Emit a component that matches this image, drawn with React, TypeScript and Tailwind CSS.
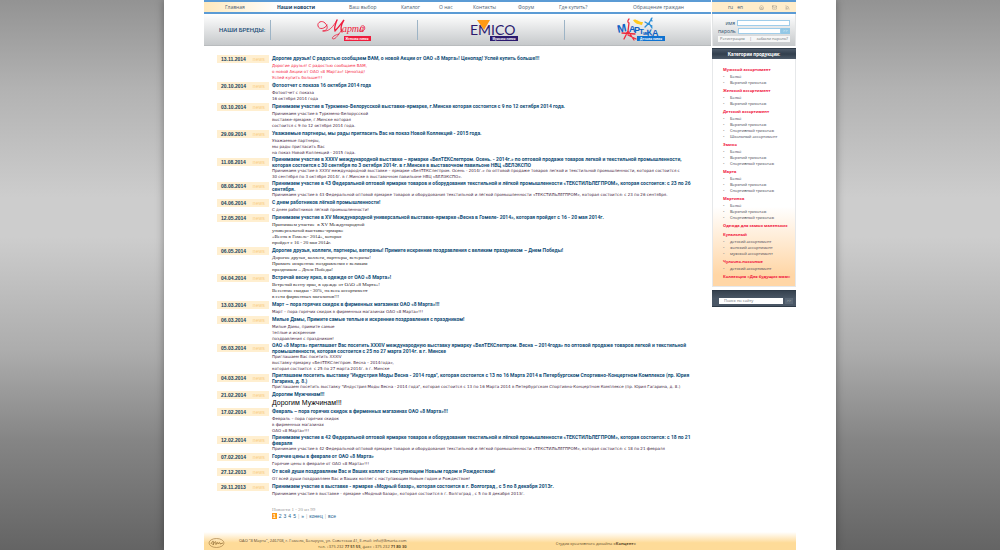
import { Home, Mail, Rss } from "lucide-react";
import clsx from "clsx";

type NewsItem = {
  date: string;
  title: string[];
  text: string[];
  style?: "red" | "serif" | "large";
};

type Category = { name: string; items: string[] };

const nav = [
  "Главная",
  "Наши новости",
  "Ваш выбор",
  "Каталог",
  "О нас",
  "Контакты",
  "Форум",
  "Где купить?",
  "Обращение граждан",
];

const news: NewsItem[] = [
  {
    date: "13.11.2014",
    title: ["Дорогие друзья! С радостью сообщаем ВАМ, о новой Акции от ОАО «8 Марта»! Ценопад! Успей купить больше!!!"],
    text: ["Дорогие друзья! С радостью сообщаем ВАМ,", "о новой Акции от ОАО «8 Марта»! Ценопад!", "Успей купить больше!!!"],
    style: "red",
  },
  {
    date: "20.10.2014",
    title: ["Фотоотчет с показа 16 октября 2014 года"],
    text: ["Фотоотчет с показа", "16 октября 2014 года"],
  },
  {
    date: "03.10.2014",
    title: ["Принимаем участие в Туркмено-Белорусской выставке-ярмарке, г.Минске которая состоится с 9 по 12 октября 2014 года."],
    text: ["Принимаем участие в Туркмено-Белорусской", "выставке-ярмарке, г.Минске которая", "состоится с 9 по 12 октября 2014 года."],
  },
  {
    date: "29.09.2014",
    title: ["Уважаемые партнеры, мы рады пригласить Вас на показ Новой Коллекций - 2015 года."],
    text: ["Уважаемые партнеры,", "мы рады пригласить Вас", "на показ Новой Коллекций - 2015 года."],
  },
  {
    date: "11.08.2014",
    title: [
      "Принимаем участие в XXXV международной выставке – ярмарке «БелТЕКСлегпром. Осень. - 2014г.» по оптовой продаже товаров легкой и текстильной промышленности,",
      "которая состоится с 30 сентября по 3 октября 2014г. в г.Минске в выставочном павильоне НВЦ «БЕЛЭКСПО",
    ],
    text: [
      "Принимаем участие в XXXV международной выставке – ярмарке «БелТЕКСлегпром. Осень - 2014г.» по оптовой продаже товаров легкой и текстильной промышленности, которая состоится с",
      "30 сентября по 3 октября 2014г. в г.Минске в выставочном павильоне НВЦ «БЕЛЭКСПО».",
    ],
  },
  {
    date: "08.08.2014",
    title: [
      "Принимаем участие в 43 Федеральной оптовой ярмарке товаров и оборудования текстильной и лёгкой промышленности «ТЕКСТИЛЬЛЕГПРОМ», которая состоится: с 23 по 26",
      "сентября.",
    ],
    text: ["Принимаем участие в 43 Федеральной оптовой ярмарке товаров и оборудования текстильной и лёгкой промышленности «ТЕКСТИЛЬЛЕГПРОМ», которая состоится: с 23 по 26 сентября."],
  },
  {
    date: "04.06.2014",
    title: ["С днем работников лёгкой промышленности!"],
    text: ["С днем работников лёгкой промышленности!"],
  },
  {
    date: "12.05.2014",
    title: ["Принимаем участие в XV Международной универсальной выставке-ярмарке «Весна в Гомеле- 2014», которая пройдет с 16 - 20 мая 2014г."],
    text: ["Принимаем участие  в XV Международной", "универсальной выставке-ярмарке", "«Весна в Гомеле- 2014», которая", "пройдет с 16 - 20 мая 2014г."],
    style: "serif",
  },
  {
    date: "06.05.2014",
    title: ["Дорогие друзья, коллеги, партнеры, ветераны! Примите искренние поздравления с великим праздником – Днем Победы!"],
    text: ["Дорогие друзья, коллеги, партнеры, ветераны!", "Примите искренние поздравления с великим", "праздником – Днем Победы!"],
    style: "serif",
  },
  {
    date: "04.04.2014",
    title: ["Встречай весну ярко, в одежде от ОАО «8 Марта»!"],
    text: ["Встречай весну ярко, в одежде от ОАО «8 Марта»!", "Весенние скидки - 30%, на весь ассортимент", "в сети фирменных магазинов!!!"],
    style: "serif",
  },
  {
    date: "13.03.2014",
    title: ["Март – пора горячих скидок в фирменных магазинах ОАО «8 Марта»!!!"],
    text: ["Март – пора горячих скидок в фирменных магазинах ОАО «8 Марта»!!!"],
  },
  {
    date: "06.03.2014",
    title: ["Милые Дамы, Примите самые теплые и искренние поздравления с праздником!"],
    text: ["Милые Дамы, примите самые", "теплые и искренние", "поздравления с праздником!"],
  },
  {
    date: "05.03.2014",
    title: [
      "ОАО «8 Марта» приглашает Вас посетить XXXIV международную выставку ярмарку «БелТЕКСлегпром. Весна – 2014года» по оптовой продаже товаров легкой и текстильной",
      "промышленности, которая состоится с 25 по 27 марта 2014г. в г. Минске",
    ],
    text: ["Приглашаем Вас посетить XXXIV", "выставку-ярмарку «БелТЕКСлегпром. Весна – 2014года»,", "которая состоится  с 25 по 27 марта 2014г. в г. Минске"],
  },
  {
    date: "04.03.2014",
    title: [
      "Приглашаем посетить выставку \"Индустрия Моды Весна - 2014 года\", которая состоится с 13 по 16 Марта 2014 в Петербургском Спортивно-Концертном Комплексе (пр. Юрия",
      "Гагарина, д. 8.)",
    ],
    text: ["Приглашаем посетить выставку \"Индустрия Моды Весна - 2014 года\", которая состоится с 13 по 16 Марта 2014 в Петербургском Спортивно-Концертном Комплексе (пр. Юрия Гагарина, д. 8.)"],
  },
  {
    date: "21.02.2014",
    title: ["Дорогим Мужчинам!!!"],
    text: ["Дорогим Мужчинам!!!"],
    style: "large",
  },
  {
    date: "17.02.2014",
    title: ["Февраль – пора горячих скидок в фирменных магазинах ОАО «8 Марта»!!!"],
    text: ["Февраль – пора горячих скидок", "в фирменных магазинах", "ОАО «8 Марта»!!!"],
  },
  {
    date: "12.02.2014",
    title: [
      "Принимаем участие в 42 Федеральной оптовой ярмарке товаров и оборудования текстильной и лёгкой промышленности «ТЕКСТИЛЬЛЕГПРОМ», которая состоится: с 18 по 21",
      "февраля",
    ],
    text: ["Принимаем участие в 42 Федеральной оптовой ярмарке товаров и оборудования текстильной и лёгкой промышленности «ТЕКСТИЛЬЛЕГПРОМ», которая состоится: с 18 по 21 февраля"],
  },
  {
    date: "07.02.2014",
    title: ["Горячие цены в феврале от ОАО «8 Марта»"],
    text: ["Горячие цены в феврале от ОАО «8 Марта»!!!"],
  },
  {
    date: "27.12.2013",
    title: ["От всей души поздравляем Вас и Ваших коллег с наступающим Новым годом и Рождеством!"],
    text: ["От всей души поздравляем Вас и Ваших коллег с наступающим Новым годом и Рождеством!"],
  },
  {
    date: "29.11.2013",
    title: ["Принимаем участие в выставке - ярмарке «Модный базар», которая состоится в г. Волгоград , с 5 по 8 декабря 2013г."],
    text: ["Принимаем участие в выставке - ярмарке «Модный базар», которая состоится в г. Волгоград , с 5 по 8 декабря 2013г."],
  },
];

const categories: Category[] = [
  { name: "Мужской ассортимент", items: ["Бельё", "Верхний трикотаж"] },
  { name: "Женский ассортимент", items: ["Бельё", "Верхний трикотаж"] },
  { name: "Детский ассортимент", items: ["Бельё", "Верхний трикотаж", "Спортивный трикотаж", "Школьный ассортимент"] },
  { name: "Эмико", items: ["Бельё", "Верхний трикотаж", "Спортивный трикотаж"] },
  { name: "Марта", items: ["Бельё", "Верхний трикотаж", "Спортивный трикотаж"] },
  { name: "Мартинка", items: ["Бельё", "Верхний трикотаж", "Спортивный трикотаж"] },
  { name: "Одежда для самых маленьких", items: [] },
  { name: "Купальный", items: ["детский ассортимент", "женский ассортимент", "мужской ассортимент"] },
  { name: "Чулочно-носочные", items: ["детский ассортимент"] },
  { name: "Коллекция «Для будущих мам»", items: [] },
];

function MartaLogo() {
  return (
    <svg width="56" height="26" viewBox="0 0 56 26" role="img" aria-label="Марта">
      <g fill="none" stroke="#ee1c3c" strokeLinecap="round">
        <path d="M11 8C9 12 3 13 2 9C1 5 6 3 9 6C13 10 11 14 7 14" strokeWidth="0.9" />
        <path d="M7 14C13 15 17 10 21 3" strokeWidth="0.8" />
        <path d="M21 3C19 8 18 12 19 14C23 10 25 7 28 3C25 8 24 12 26 15" strokeWidth="1.3" />
        <path d="M25 14C22 18 20 22 17 22C15 21 18 18 23 17" strokeWidth="0.8" />
        <path d="M43 14C48 15 50 12 48 9C46 8 43 10 45 13" strokeWidth="0.8" />
      </g>
      <text x="26" y="15" fill="#ee1c3c" fontSize="10" fontStyle="italic" fontFamily="'Liberation Serif', serif">
        арта
      </text>
      <rect x="28" y="19" width="27" height="5" fill="#ee1c3c" />
      <text x="41" y="23" textAnchor="middle" fill="#fff" fontSize="3" fontWeight="700" fontFamily="'Liberation Sans', sans-serif">
        Женская линия
      </text>
    </svg>
  );
}

function EmicoLogo() {
  return (
    <svg width="50" height="26" viewBox="0 0 50 26" role="img" aria-label="EMICO">
      <text x="0" y="18" fill="#2b1a6e" fontSize="14" fontFamily="Lato, sans-serif">
        EMICO
      </text>
      <path d="M7 3H20L14 13Z" fill="#ff9a14" />
      <rect x="20" y="19" width="28" height="5" fill="#2b1a6e" />
      <text x="34" y="23" textAnchor="middle" fill="#fff" fontSize="3" fontWeight="700" fontFamily="'Liberation Sans', sans-serif">
        Мужская линия
      </text>
    </svg>
  );
}

function MartinkaLogo() {
  return (
    <svg width="50" height="26" viewBox="0 0 50 26" role="img" aria-label="Мартинка">
      <g fill="none" stroke="#ee2a3c" strokeWidth="1.3" strokeLinecap="round">
        <path d="M12 2C10 4 11 6 12 6M12 6L11 14L7 22M11 14L17 23M5 16L18 17M11 18L19 22" />
      </g>
      <path d="M16 3C19 1 21 5 26 5L25 8C21 7 18 7 16 3Z" fill="#ffc91f" />
      <g fill="none" stroke="#2c8fd8" strokeWidth="1.3" strokeLinecap="round">
        <path d="M35 1L32 6L28 10M32 6L35 11M28 5L35 9M34 2L35 4" />
      </g>
      <g fill="#0e62c4" fontWeight="700" fontFamily="'Liberation Sans', sans-serif">
        <text x="1" y="16" transform="rotate(-12 1 16)" fontSize="11">М</text>
        <text x="12" y="15" fontSize="9">А</text>
        <text x="17" y="16" fontSize="9">Р</text>
        <text x="22" y="17" fontSize="8">Т</text>
        <text x="26" y="18" fontSize="6">и</text>
        <text x="28" y="18" fontSize="5">н</text>
        <text x="30" y="19" transform="rotate(-6 30 19)" fontSize="9">К</text>
        <text x="35" y="19" fontSize="9">А</text>
      </g>
      <rect x="20" y="19" width="28" height="5" fill="#0e72d0" />
      <text x="34" y="23" textAnchor="middle" fill="#fff" fontSize="3" fontWeight="700" fontFamily="'Liberation Sans', sans-serif">
        Детская линия
      </text>
    </svg>
  );
}

function NewsRow({ item }: { item: NewsItem }) {
  const plain = !item.style || item.style === "red";
  return (
    <article className="grid grid-cols-[52px_1fr] gap-x-[3px]">
      <div className="flex h-2 items-center justify-between self-center bg-[#ffefd0] px-1">
        <time className="font-bold text-[#163f5c]">{item.date}</time>
        <span className="tracking-wide text-[#f9cc80]">news</span>
      </div>
      <h2 className={clsx("font-['Roboto',sans-serif] font-bold text-[#134f78]", item.title.length === 1 && "leading-[9px]")}>
        {item.title.map((line) => (
          <a key={line} href="#" className="block">
            {line}
          </a>
        ))}
      </h2>
      <div
        className={clsx(
          "col-start-2",
          plain && "font-['DejaVu_Sans',sans-serif] text-[4px]",
          !item.style && "text-[#3f1d3d]",
          item.style === "red" && "text-[#f5253f]",
          item.style === "serif" && "font-['Liberation_Serif',serif] text-[#1f1a1f]",
          item.style === "large" && "text-[7px] leading-[8px] text-black"
        )}
      >
        {item.text.map((line) => (
          <p key={line}>{line}</p>
        ))}
      </div>
    </article>
  );
}

function Sidebar() {
  return (
    <aside className="w-[84px] shrink-0 font-['Open_Sans',sans-serif] text-[4px] leading-[6px]">
      <div className="flex h-3.5 items-center border-y-2 border-[#5b9bd5] bg-[#ffedcb] pl-4 text-[5px] text-[#3a5a72]">
        <a href="#" className="mr-1">ru</a>
        <a href="#">en</a>
        <div className="ml-4 flex gap-2 text-[#8f8a80]">
          <a href="#" aria-label="Домой"><Home size={5} /></a>
          <a href="#" aria-label="Почта"><Mail size={5} /></a>
          <a href="#" aria-label="RSS"><Rss size={5} /></a>
        </div>
      </div>

      <form className="flex h-8 flex-col gap-0.5 border-x border-[#e2e4e5] bg-linear-to-b from-white to-[#c6c9cb] px-[5px] pt-1.5 text-[#2c4f6b]">
        <div className="flex items-center justify-end gap-0.5">
          <label htmlFor="login" className="text-[5px]">имя</label>
          <input id="login" className="h-[6px] w-[53px] border border-[#9fcdea] bg-white px-0.5" />
        </div>
        <div className="flex items-center justify-end">
          <label htmlFor="password" className="mr-0.5 text-[5px]">пароль</label>
          <input id="password" type="password" className="h-[6px] w-[43px] border border-[#9fcdea] bg-white px-0.5" />
          <button type="button" className="h-[6px] w-[10px] bg-[#93c8e6] text-white">&gt;&gt;</button>
        </div>
        <div className="flex h-[6px] items-center justify-between bg-white/80 px-0.5 whitespace-nowrap text-[#6b7075]">
          <a href="#">Регистрация</a>
          <span>|</span>
          <a href="#">забыли пароль?</a>
        </div>
      </form>

      <h2 className="mt-0.5 h-[11px] border-t border-[#2e3a47] bg-linear-to-b from-[#4d5a69] via-[#323f4d] to-[#4d5a69] text-center font-['Roboto',sans-serif] text-[5px] leading-[10px] font-bold text-white">
        Категории продукции:
      </h2>
      <nav className="border-x border-b border-[#e6e8ea] bg-linear-to-b from-white from-65% to-[#ffd6a6] to-95% pt-[6px] pb-[5px] pl-[10px] whitespace-nowrap">
        {categories.map((category) => (
          <section key={category.name}>
            <h3 className="leading-[9px] font-bold text-[#f0143c]">
              <a href="#">{category.name}</a>
            </h3>
            <ul className="text-[#38384c]">
              {category.items.map((name) => (
                <li key={name} className="flex">
                  <span className="w-[7px] text-[#999]">•</span>
                  <a href="#">{name}</a>
                </li>
              ))}
            </ul>
          </section>
        ))}
      </nav>

      <form className="mt-[3px] flex h-[17px] items-end gap-0.5 border-y border-[#2e3a47] bg-linear-to-b from-[#36424f] via-[#4a5766] to-[#4a5766] px-[3px] pb-0.5 pl-[7px]">
        <input
          aria-label="Поиск по сайту"
          placeholder="Поиск по сайту"
          className="h-[6px] min-w-0 flex-1 bg-white px-[5px] placeholder:text-[#6b7075]"
        />
        <button type="button" className="h-[6px] w-2 bg-[#5b6876] text-[#c5ccd3]">&gt;&gt;</button>
      </form>
    </aside>
  );
}

export default function App() {
  return (
    <div className="min-h-screen bg-[linear-gradient(to_bottom,#939393_0%,#b2b2b2_16%,#cdcdcd_36%,#cdcdcd_43%,#acacac_64%,#858585_80%,#646464_100%)] font-['Liberation_Sans',sans-serif] text-[5px] leading-[6px]">
      <div className="mx-auto flex min-h-screen max-w-2xl flex-col bg-white px-10 shadow-[0_0_8px_rgba(0,0,0,0.35)]">
        <div className="flex flex-1 gap-px">
          <main className="min-w-0 flex-1">
            <nav className="grid h-3.5 grid-cols-[52fr_72fr_52fr_38fr_34fr_45fr_41fr_74fr_78fr] items-center border-y-2 border-[#5b9bd5] bg-linear-to-r from-[#ffe9bd] to-white to-15% pl-[21px] font-['Open_Sans',sans-serif] whitespace-nowrap text-[#4a6072]">
              {nav.map((label, i) => (
                <a key={label} href="#" className={clsx(i === 1 && "font-bold text-[#143f66]")}>
                  {label}
                </a>
              ))}
            </nav>

            <div className="grid h-8 grid-cols-[66px_1fr_1fr_1fr] items-center border-b border-[#b9bcbe] bg-linear-to-b from-white to-[#c6c9cb]">
              <p className="pl-[15px] font-['Roboto',sans-serif] text-[6px] font-medium whitespace-nowrap text-[#1d4f78]">НАШИ БРЕНДЫ:</p>
              <a href="#" className="flex h-5 items-center justify-center border-l border-[#9db4c6]"><MartaLogo /></a>
              <a href="#" className="flex h-5 items-center justify-center border-l border-[#9db4c6] pl-2"><EmicoLogo /></a>
              <a href="#" className="flex h-5 items-center justify-center border-l border-[#9db4c6] pl-2"><MartinkaLogo /></a>
            </div>

            <div className="pt-2 pb-[10px] pl-[13px] whitespace-pre">
              {news.map((item) => (
                <NewsRow key={item.date} item={item} />
              ))}
            </div>

            <div className="pb-3 pl-[68px]">
              <p className="font-['Liberation_Serif',serif] text-[#999]">Новости 1 - 20 из 99</p>
              <div className="flex gap-0.5 text-[#1d5f8f]">
                <span className="bg-[#ff9a14] px-px font-bold text-white">1</span>
                <a href="#">2</a>
                <a href="#">3</a>
                <a href="#">4</a>
                <a href="#">5</a>
                <span className="text-[#bbb]">|</span>
                <a href="#">»</a>
                <span className="text-[#bbb]">|</span>
                <a href="#">конец</a>
                <span className="text-[#bbb]">|</span>
                <a href="#">все</a>
              </div>
            </div>
          </main>
          <Sidebar />
        </div>

        <footer className="flex h-[18px] items-end bg-linear-to-b from-white to-[#fedb98] to-60% font-['Open_Sans',sans-serif] text-[4px] text-[#5c4a2c]">
          <svg width="17" height="12" viewBox="0 0 17 12" className="ml-1 mb-px" role="img" aria-label="8 Марта">
            <ellipse cx="8.5" cy="6" rx="7.5" ry="4.5" fill="none" stroke="#a9834a" strokeWidth="0.7" />
            <path d="M3 7C5 3 6 3 5 8C7 4 8 3 8 8M8 7C9 5 10 5 10 7C11 5 12 5 12 7L15 6" fill="none" stroke="#8a6630" strokeWidth="0.7" />
          </svg>
          <address className="ml-3.5 text-right not-italic">
            <p>ОАО "8 Марта", 246708, г. Гомель, Беларусь, ул. Советская 41, E-mail: <a href="#">info@8marta.com</a></p>
            <p>тел. +375 232 <b>77 51 55</b>, факс +375 232 <b>71 80 30</b></p>
          </address>
          <p className="mr-40 ml-auto pb-[3px]">
            Студия креативного дизайна <a href="#" className="font-bold">«Концепт»</a>
          </p>
        </footer>
      </div>
    </div>
  );
}
